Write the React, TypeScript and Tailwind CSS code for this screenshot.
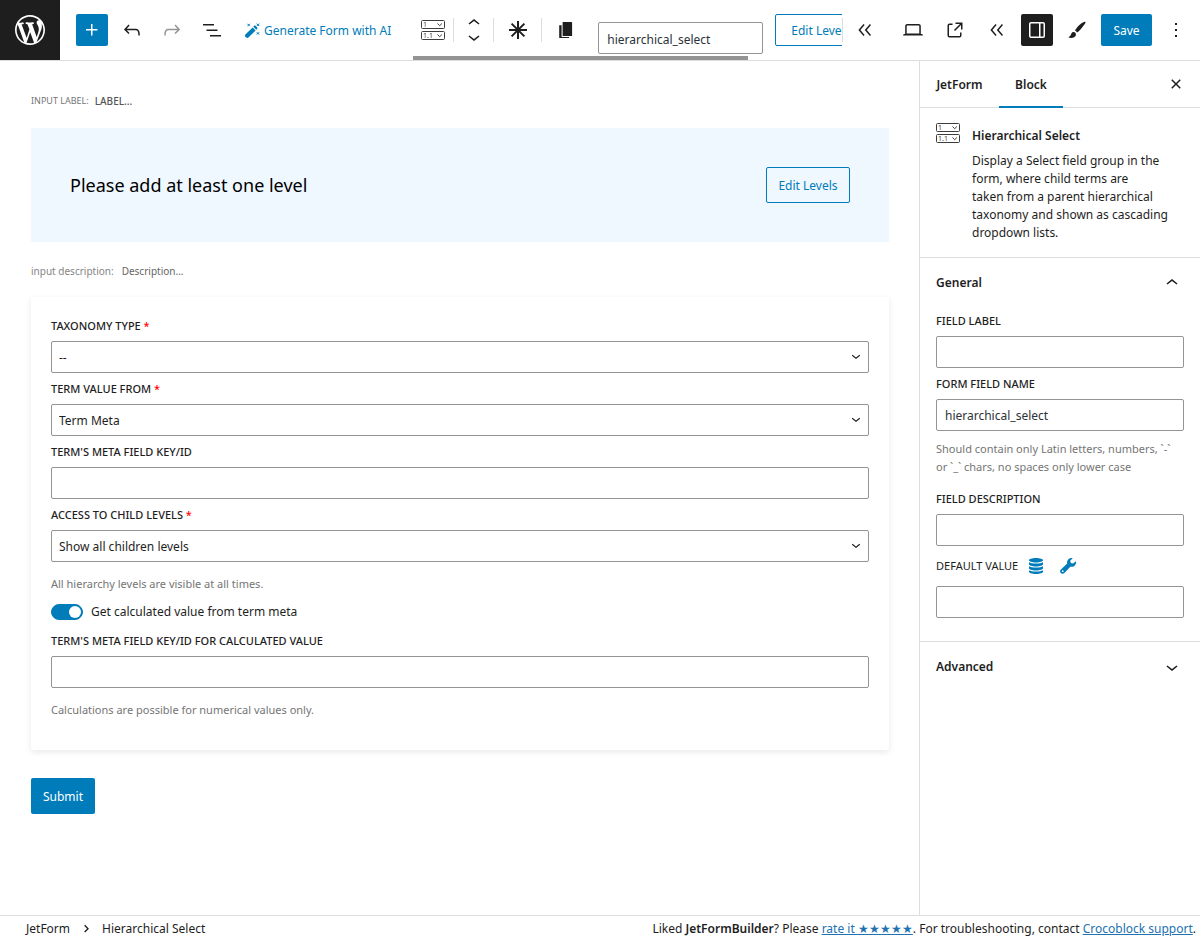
import { useState, type ReactNode } from "react";
import clsx from "clsx";

const PATHS = {
    plus: "M11 12.5V17.5H12.5V12.5H17.5V11H12.5V6H11V11H6V12.5H11Z",
    undo: "M18.3 11.7c-.6-.6-1.4-.9-2.3-.9H6.7l2.9-3.3-1.1-1-4.5 5L8.5 16l1-1-2.7-2.7H16c.5 0 .9.2 1.3.5 1 1 1 3.4 1 4.5v.3h1.5v-.2c0-1.5 0-4.3-1.5-5.7z",
    redo: "M15.6 6.5l-1.1 1 2.9 3.3H8c-.9 0-1.7.3-2.3.9-1.4 1.5-1.4 4.2-1.4 5.6v.2h1.5v-.3c0-1.1 0-3.5 1-4.5.3-.3.7-.5 1.3-.5h9.2L14.5 15l1.1 1.1 4.6-4.6-4.6-5z",
    listView: "M3 6h11v1.5H3V6Zm3.5 5.5h11V13h-11v-1.5ZM21 17H10v1.5h11V17Z",
    chevronUp: "M6.5 12.4L12 8l5.5 4.4-.9 1.2L12 10l-4.5 3.6-1-1.2z",
    chevronDown: "M17.5 11.6L12 16l-5.5-4.4.9-1.2L12 14l4.5-3.6 1 1.2z",
    desktop: "M20.5 16h-.7V8c0-1.1-.9-2-2-2H6.2c-1.1 0-2 .9-2 2v8h-.7c-.8 0-1.5.7-1.5 1.5h20c0-.8-.7-1.5-1.5-1.5zM5.7 8c0-.3.2-.5.5-.5h11.6c.3 0 .5.2.5.5v7.6H5.7V8z",
    external: "M19.5 4.5h-7V6h4.44l-5.97 5.97 1.06 1.06L18 7.06v4.44h1.5v-7Zm-13 1a2 2 0 0 0-2 2v10a2 2 0 0 0 2 2h10a2 2 0 0 0 2-2v-3H17v3a.5.5 0 0 1-.5.5h-10a.5.5 0 0 1-.5-.5v-10a.5.5 0 0 1 .5-.5h3V5.5h-3Z",
    drawer: "M18 4H6c-1.1 0-2 .9-2 2v12c0 1.1.9 2 2 2h12c1.1 0 2-.9 2-2V6c0-1.1-.9-2-2-2zm-4 14.5H6c-.3 0-.5-.2-.5-.5V6c0-.3.2-.5.5-.5h8v13zm4.5-.5c0 .3-.2.5-.5.5h-2.5v-13H18c.3 0 .5.2.5.5v12z",
    more: "M13 19h-2v-2h2v2zm0-6h-2v-2h2v2zm0-6h-2V5h2v2z",
    close: "M12 13.06l3.712 3.713 1.061-1.06L13.061 12l3.712-3.712-1.06-1.06L12 10.938 8.288 7.227l-1.061 1.06L10.939 12l-3.712 3.712 1.06 1.061L12 13.061z",
    chevronsLeft: "M11.6 7l-1.1-1L5.4 12l5.1 6 1.1-1-4.2-5zM18 7l-1.1-1-5.1 6 5.1 6 1.1-1-4.2-5z",
    brush: "M20.4 3.900c-.8-.6-2.500.2-5.400 2.700-2.400 2.100-4.200 4.400-5 6 .9.3 1.600 1 2 2 1.500-1 3.500-3.100 5.300-5.400 2.400-3 3.700-4.700 3.100-5.300zM8.900 14c-1.300-.1-2.100.5-2.600 1.700-.5 1.300-1.200 2.500-2.900 3.600 1.500 1 4.100.9 5.800-.1 1.400-.8 2-2.200 1.600-3.500-.3-1-1-1.600-1.900-1.700z",
    copy: "M9.200 4h8.300a.6.6 0 0 1 .6.6v12.800a.6.6 0 0 1-.6.6H9.200a.6.6 0 0 1-.6-.6V4.600a.6.6 0 0 1 .6-.6zM5.200 7.200h2.400v11c0 .5.4.9.9.9h6.600v.9H5.800a.6.6 0 0 1-.6-.6z",
    database: "M12 4c4 0 7 1 7 2.200S16 8.400 12 8.400 5 7.400 5 6.200 8 4 12 4zM5 8.200c1.200.9 4 1.400 7 1.400s5.800-.5 7-1.400v2c0 1.200-3 2.200-7 2.200s-7-1-7-2.200zm0 4c1.200.9 4 1.400 7 1.400s5.800-.5 7-1.400v2c0 1.200-3 2.200-7 2.200s-7-1-7-2.200zm0 4c1.200.9 4 1.400 7 1.400s5.800-.5 7-1.400v1.600c0 1.200-3 2.200-7 2.200s-7-1-7-2.200z",
    wrench: "M19.900 7.200c.4 1.700-.1 3.400-1.300 4.500-1.200 1.100-2.800 1.400-4.300 1l-5.900 6.200c-1 1-2.600 1.100-3.600.1s-.9-2.600.1-3.600l6.300-5.800c-.4-1.500 0-3.100 1.200-4.300 1.200-1.100 2.800-1.500 4.300-1.100l-2.500 2.500.6 2.200 2.300.6zM6.700 16.300a.9.9 0 1 0 0 1.800.9.9 0 0 0 0-1.800z",
};

type IconName = keyof typeof PATHS;

function Icon({ name, className }: { name: IconName; className?: string }) {
    return (
        <svg viewBox="0 0 24 24" fill="currentColor" fillRule="evenodd" aria-hidden="true" className={clsx("shrink-0", className ?? "size-6")}>
            <path d={PATHS[name]} />
        </svg>
    );
}

function WordPressLogo() {
    return (
        <svg viewBox="-2 -2 24 24" fill="currentColor" aria-hidden="true" className="size-9">
            <path d="M20 10c0-5.510-4.490-10-10-10C4.480 0 0 4.490 0 10c0 5.520 4.480 10 10 10 5.510 0 10-4.480 10-10zM7.780 15.370L4.370 6.220c.55-.02 1.170-.08 1.170-.08.5-.06.44-1.130-.06-1.110 0 0-1.450.11-2.370.11-.18 0-.37 0-.58-.01C4.120 2.690 6.870 1.110 10 1.110c2.330 0 4.450.87 6.050 2.340-.68-.11-1.650.39-1.650 1.580 0 .74.45 1.360.9 2.100.35.61.55 1.360.55 2.460 0 1.490-1.400 5-1.400 5l-3.030-8.370c.54-.02.82-.17.82-.17.5-.05.44-1.250-.06-1.220 0 0-1.440.12-2.380.12-.87 0-2.330-.12-2.330-.12-.5-.03-.56 1.200-.06 1.220l.92.08 1.260 3.410zM17.410 10c.24-.64.74-1.870.43-4.250.7 1.290 1.050 2.710 1.050 4.250 0 3.290-1.730 6.240-4.400 7.780.97-2.590 1.940-5.200 2.920-7.780zM6.100 18.090C3.120 16.650 1.110 13.530 1.110 10c0-1.300.23-2.480.72-3.590C3.250 10.300 4.670 14.200 6.100 18.090zm4.030-6.630l2.580 6.980c-.86.29-1.760.45-2.710.45-.79 0-1.570-.11-2.290-.33.81-2.380 1.620-4.740 2.420-7.100z" />
        </svg>
    );
}

function HierarchicalIcon() {
    return (
        <svg viewBox="0 0 24 20" fill="none" stroke="#3c3c3c" aria-hidden="true" className="h-5 w-6 shrink-0">
            <rect x="0.5" y="0.5" width="23" height="8" rx="1" />
            <rect x="0.5" y="11.5" width="23" height="8" rx="1" />
            <path d="M16.500 3.500l2.200 2.200 2.200-2.200M16.500 14.500l2.200 2.200 2.200-2.200" />
            <text x="2" y="7" fontSize="7" fill="#3c3c3c" stroke="none">1</text>
            <text x="2" y="18" fontSize="7" fill="#3c3c3c" stroke="none">1.1</text>
        </svg>
    );
}

function MagicWand() {
    return (
        <svg viewBox="0 0 16 16" fill="currentColor" aria-hidden="true" className="size-4 shrink-0">
            <path d="M8.600 4.400l3 3-7.200 7.200c-.6.600-1.500.600-2.100 0l-.9-.9c-.6-.6-.6-1.500 0-2.100zM9.300 3.700l.9-.9c.4-.4 1-.4 1.400 0l1.600 1.600c.4.4.4 1 0 1.400l-.9.900z" />
            <path d="M3.500.8l2.400 2.400m0-2.400L3.500 3.200M12.800.6l2.400 2.400m0-2.400L12.800 3M12.800 9.200l2.400 2.400m0-2.400l-2.400 2.400" stroke="currentColor" fill="none" />
        </svg>
    );
}

function ToolButton({ label, icon, className }: { label: string; icon: IconName; className?: string }) {
    return (
        <button type="button" aria-label={label} className={clsx("flex size-8 shrink-0 items-center justify-center rounded-[2px]", className)}>
            <Icon name={icon} />
        </button>
    );
}

function Divider() {
    return <span className="h-6 w-px shrink-0 bg-[#ddd]" />;
}

function Header() {
    return (
        <header className="flex h-[61px] items-center border-b border-[#ddd] bg-white">
            <a href="#dashboard" aria-label="View forms" className="flex size-[60px] shrink-0 items-center justify-center bg-[#1e1e1e] text-white">
                <WordPressLogo />
            </a>
            <div className="flex shrink-0 items-center gap-2 pl-4">
                <ToolButton label="Add block" icon="plus" className="bg-[#007cba] text-white" />
                <ToolButton label="Undo" icon="undo" />
                <ToolButton label="Redo" icon="redo" className="text-[#949494]" />
                <ToolButton label="Document overview" icon="listView" />
                <button type="button" className="ml-2 flex items-center gap-1 pt-0.5 whitespace-nowrap text-[#007cba]">
                    <MagicWand />
                    Generate Form with AI
                </button>
            </div>

            <div className="ml-[22px] flex h-[60px] min-w-0 flex-1 flex-col justify-between">
                <div className="flex h-14 items-center pt-1">
                    <div className="flex h-full min-w-0 flex-1 items-center overflow-hidden">
                        <button type="button" aria-label="Hierarchical Select" className="flex w-10 shrink-0 justify-center">
                            <HierarchicalIcon />
                        </button>
                        <Divider />
                        <div className="flex w-[39px] shrink-0 flex-col items-center">
                            <button type="button" aria-label="Move up" className="flex h-3.5 items-center">
                                <Icon name="chevronUp" />
                            </button>
                            <button type="button" aria-label="Move down" className="flex h-3.5 items-center">
                                <Icon name="chevronDown" />
                            </button>
                        </div>
                        <Divider />
                        <button type="button" aria-label="Required" className="flex w-[47px] shrink-0 justify-center">
                            <svg viewBox="0 0 24 24" stroke="#1e1e1e" strokeWidth="2" aria-hidden="true" className="size-6">
                                <path d="M12 3v18M3 12h18M5.600 5.600l12.800 12.800M18.400 5.600L5.600 18.400" />
                            </svg>
                        </button>
                        <Divider />
                        <button type="button" aria-label="Duplicate" className="flex w-12 shrink-0 justify-center">
                            <Icon name="copy" />
                        </button>
                        <input
                            aria-label="Field name"
                            defaultValue="hierarchical_select"
                            className="mt-4 ml-2 h-8 w-[165px] shrink-0 rounded-[2px] border border-[#949494] px-2 pt-0.5 text-[#2c3338]"
                        />
                        <button type="button" className="ml-3 h-8 shrink-0 rounded-[2px] border border-[#007cba] px-[15px] pt-0.5 whitespace-nowrap text-[#007cba]">
                            Edit Levels
                        </button>
                    </div>
                    <Divider />
                </div>
                <div className="h-1 w-[78%] bg-[#949494]" />
            </div>

            <div className="flex shrink-0 items-center gap-2 pr-2 pl-1.5">
                <div className="flex items-center gap-2.5">
                    <ToolButton label="Hide block tools" icon="chevronsLeft" className="mr-1.5" />
                    <ToolButton label="View" icon="desktop" />
                    <ToolButton label="View form" icon="external" />
                    <ToolButton label="Collapse" icon="chevronsLeft" />
                </div>
                <ToolButton label="Settings" icon="drawer" className="bg-[#1e1e1e] text-white" />
                <ToolButton label="Styles" icon="brush" />
                <button type="button" className="h-8 w-[51px] rounded-[2px] bg-[#007cba] pt-0.5 text-white">
                    Save
                </button>
                <ToolButton label="Options" icon="more" />
            </div>
        </header>
    );
}

interface FieldProps {
    id: string;
    label: string;
    required?: boolean;
    children: ReactNode;
}

function Field({ id, label, required, children }: FieldProps) {
    return (
        <div>
            <label htmlFor={id} className="mb-[7px] block text-[11px] leading-4 font-medium uppercase">
                {label}
                {required && <span className="text-[#f00]"> *</span>}
            </label>
            {children}
        </div>
    );
}

function TextInput({ id, value }: { id: string; value?: string }) {
    return <input id={id} defaultValue={value} className="block h-8 w-full rounded-[2px] border border-[#949494] bg-white px-2 text-[#2c3338]" />;
}

function Select({ id, options }: { id: string; options: string[] }) {
    return (
        <div className="relative">
            <select id={id} className="block h-8 w-full appearance-none rounded-[2px] border border-[#949494] bg-white px-[7px] pt-0.5">
                {options.map((option) => (
                    <option key={option}>{option}</option>
                ))}
            </select>
            <Icon name="chevronDown" className="pointer-events-none absolute top-1.5 right-1 size-[18px]" />
        </div>
    );
}

function Editor() {
    const [calculated, setCalculated] = useState(true);

    return (
        <main className="min-w-0 flex-1 pt-8 pr-[30px] pb-8 pl-[31px]">
            <div className="flex h-4 items-center gap-1.5 uppercase">
                <span className="text-[9px] text-[#757575]">Input label:</span>
                <span className="text-[10px] font-medium text-[#555]">Label...</span>
            </div>

            <div className="mt-[19px] flex h-[114px] items-center justify-between bg-[#eff7ff] px-[39px]">
                <p className="text-[18px] text-black">Please add at least one level</p>
                <button type="button" className="h-9 w-[84px] rounded-[2px] border border-[#007cba] pt-0.5 whitespace-nowrap text-[#007cba]">
                    Edit Levels
                </button>
            </div>

            <div className="mt-[21px] flex h-4 items-center gap-2 text-[10px]">
                <span className="text-[#858585]">input description:</span>
                <span className="text-[#666]">Description...</span>
            </div>

            <section className="mt-[18px] px-5 pt-[21px] pb-[31px] shadow-[0_2px_6px_rgba(35,40,45,0.1)]">
                <div className="flex flex-col gap-2">
                    <Field id="taxonomy" label="Taxonomy type" required>
                        <Select id="taxonomy" options={["--", "Categories", "Tags"]} />
                    </Field>
                    <Field id="term-value" label="Term value from" required>
                        <Select id="term-value" options={["Term Meta", "Term ID", "Term Name"]} />
                    </Field>
                    <Field id="meta-key" label="Term's meta field key/ID">
                        <TextInput id="meta-key" />
                    </Field>
                    <Field id="access" label="Access to child levels" required>
                        <Select id="access" options={["Show all children levels", "Show next level only"]} />
                    </Field>
                </div>
                <p className="mt-[13px] text-[11px] leading-[18px] text-[#757575]">All hierarchy levels are visible at all times.</p>

                <label className="mt-2.5 mb-3 flex h-[18px] w-fit items-center gap-2">
                    <input
                        type="checkbox"
                        role="switch"
                        checked={calculated}
                        onChange={(e) => setCalculated(e.target.checked)}
                        className="h-4 w-8 appearance-none rounded-full border border-[#949494] bg-white before:m-px before:block before:size-3 before:rounded-full before:bg-[#949494] checked:border-[#007cba] checked:bg-[#007cba] checked:before:ml-[17px] checked:before:bg-white"
                    />
                    Get calculated value from term meta
                </label>

                <Field id="calc-key" label="Term's meta field key/ID for calculated value">
                    <TextInput id="calc-key" />
                </Field>
                <p className="mt-[13px] text-[11px] leading-[18px] text-[#757575]">Calculations are possible for numerical values only.</p>
            </section>

            <button type="button" className="mt-7 h-9 w-16 rounded-[2px] bg-[#007cba] pt-0.5 text-white">
                Submit
            </button>
        </main>
    );
}

function Sidebar() {
    return (
        <aside className="w-[281px] shrink-0 border-l border-[#ddd]">
            <div className="flex h-[47px] items-center border-b border-[#ddd] pr-2 font-semibold">
                <button type="button" className="h-[47px] w-[79px] pt-0.5">JetForm</button>
                <button type="button" className="h-[47px] w-16 border-b-2 border-[#007cba] pt-1">Block</button>
                <ToolButton label="Close settings" icon="close" className="ml-auto" />
            </div>

            <div className="flex gap-3 border-b border-[#ddd] px-4 py-[15px]">
                <HierarchicalIcon />
                <div className="pt-1">
                    <h2 className="mb-[7px] leading-[18px] font-semibold">Hierarchical Select</h2>
                    <p className="leading-[18px]">
                        Display a Select field group in the
                        <br />
                        form, where child terms are
                        <br />
                        taken from a parent hierarchical
                        <br />
                        taxonomy and shown as cascading
                        <br />
                        dropdown lists.
                    </p>
                </div>
            </div>

            <section className="border-b border-[#ddd] px-4 pb-[23px]">
                <button type="button" className="flex h-[50px] w-full items-center justify-between font-semibold">
                    General
                    <Icon name="chevronUp" />
                </button>
                <div className="mt-[5px] flex flex-col gap-2">
                    <Field id="field-label" label="Field label">
                        <TextInput id="field-label" />
                    </Field>
                    <Field id="field-name" label="Form field name">
                        <TextInput id="field-name" value="hierarchical_select" />
                    </Field>
                </div>
                <p className="mt-[9px] mb-[15px] text-[11px] leading-[18px] text-[#757575]">
                    Should contain only Latin letters, numbers, `-`
                    <br />
                    or `_` chars, no spaces only lower case
                </p>
                <Field id="field-description" label="Field description">
                    <TextInput id="field-description" />
                </Field>
                <div className="my-1 flex h-8 items-center text-[#007cba]">
                    <label htmlFor="default-value" className="mr-1.5 text-[11px] text-[#1e1e1e] uppercase">
                        Default value
                    </label>
                    <button type="button" aria-label="Choose preset" className="flex size-6 items-center justify-center">
                        <Icon name="database" />
                    </button>
                    <button type="button" aria-label="Advanced value" className="ml-2 flex size-6 items-center justify-center">
                        <Icon name="wrench" />
                    </button>
                </div>
                <TextInput id="default-value" />
            </section>

            <button type="button" className="flex h-[50px] w-full items-center justify-between px-4 font-semibold">
                Advanced
                <Icon name="chevronDown" />
            </button>
        </aside>
    );
}

function Footer() {
    return (
        <footer className="flex h-[25px] items-center justify-between border-t border-[#ddd] pt-0.5 pr-1 pl-[26px] whitespace-nowrap">
            <nav aria-label="Block breadcrumb" className="flex items-center">
                <button type="button">JetForm</button>
                <svg viewBox="0 0 24 24" fill="none" stroke="currentColor" strokeWidth="2" aria-hidden="true" className="mx-1 h-4 w-6">
                    <path d="M10 6.500l5 5-5 5" />
                </svg>
                <span>Hierarchical Select</span>
            </nav>
            <p>
                Liked <strong className="font-semibold">JetFormBuilder</strong>? Please{" "}
                <a href="#rate" className="text-[#2271b1] underline">rate it ★★★★★</a>. For troubleshooting, contact{" "}
                <a href="#support" className="text-[#2271b1] underline">Crocoblock support</a>.
            </p>
        </footer>
    );
}

export default function App() {
    return (
        <div className="flex min-h-screen flex-col bg-white font-['Noto_Sans',sans-serif] text-[12px] text-[#1e1e1e]">
            <Header />
            <div className="flex flex-1">
                <Editor />
                <Sidebar />
            </div>
            <Footer />
        </div>
    );
}
